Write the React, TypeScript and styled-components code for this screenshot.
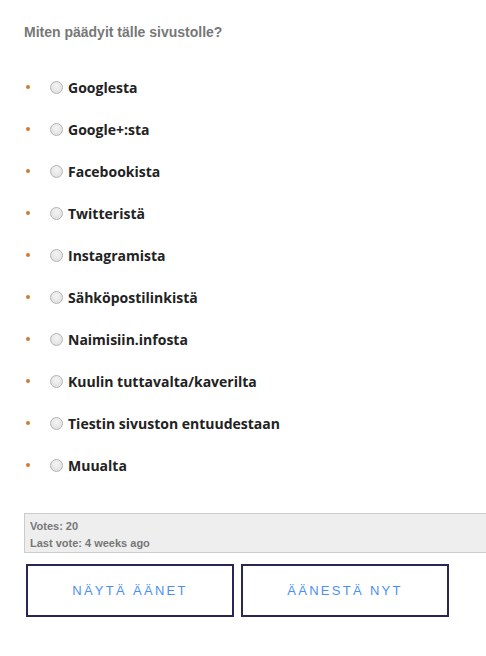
import React from 'react';
import styled, { createGlobalStyle } from 'styled-components';

const GlobalStyle = createGlobalStyle`
	html, body {
		margin: 0;
		padding: 0;
		background: #fff;
		overflow: hidden;
	}
`;

const Page = styled.div`
	width: 486px;
	height: 656px;
	padding: 24px 0 0 24px;
	box-sizing: border-box;
	overflow: hidden;
`;

const Question = styled.h3`
	margin: 0;
	font-family: 'Liberation Sans', Arial, sans-serif;
	font-size: 14px;
	font-weight: bold;
	line-height: 16px;
	color: #777;
`;

const Answers = styled.ul`
	list-style: none;
	margin: 37px 0 0 0;
	padding: 0;
	display: flex;
	flex-direction: column;
	gap: 22px;
`;

const Answer = styled.li`
	display: flex;
	align-items: center;
	height: 20px;
	font-family: 'Open Sans', sans-serif;
	font-size: 14px;
	font-weight: bold;
	color: #222;
`;

const Bullet = styled.span`
	width: 4px;
	height: 4px;
	border-radius: 50%;
	background: #cf7b35;
	margin: 0 20px 0 2px;
	flex-shrink: 0;
`;

const Radio = styled.span`
	width: 11px;
	height: 11px;
	border-radius: 50%;
	border: 1px solid #b4b4b4;
	background: radial-gradient(circle at 50% 35%, #f4f4f4 0%, #dcdcdc 100%);
	margin-right: 5px;
	flex-shrink: 0;
`;

const Stats = styled.div`
	margin-top: 38px;
	width: 480px;
	height: 40px;
	box-sizing: border-box;
	background: #eee;
	border: 1px solid #ccc;
	border-right: none;
	padding: 4px 0 0 5px;
	font-family: 'Liberation Sans', Arial, sans-serif;
	font-size: 11px;
	font-weight: bold;
	line-height: 17px;
	color: #777;
`;

const Buttons = styled.div`
	display: flex;
	gap: 7px;
	margin: 11px 0 0 2px;
`;

const Button = styled.button`
	width: 208px;
	height: 53px;
	box-sizing: border-box;
	background: #fff;
	border: 2px solid #262752;
	font-family: 'Liberation Sans', Arial, sans-serif;
	font-size: 13px;
	letter-spacing: 2.3px;
	color: #4a8ff5;
	text-transform: uppercase;
	padding: 0;
	cursor: pointer;
`;

const answers = [
	'Googlesta',
	'Google+:sta',
	'Facebookista',
	'Twitteristä',
	'Instagramista',
	'Sähköpostilinkistä',
	'Naimisiin.infosta',
	'Kuulin tuttavalta/kaverilta',
	'Tiestin sivuston entuudestaan',
	'Muualta',
];

export default function App() {
	return (
		<Page>
			<GlobalStyle />
			<Question>Miten päädyit tälle sivustolle?</Question>
			<Answers>
				{answers.map((a) => (
					<Answer key={a}>
						<Bullet />
						<Radio />
						{a}
					</Answer>
				))}
			</Answers>
			<Stats>
				<div>Votes: 20</div>
				<div>Last vote: 4 weeks ago</div>
			</Stats>
			<Buttons>
				<Button>Näytä äänet</Button>
				<Button>Äänestä nyt</Button>
			</Buttons>
		</Page>
	);
}
